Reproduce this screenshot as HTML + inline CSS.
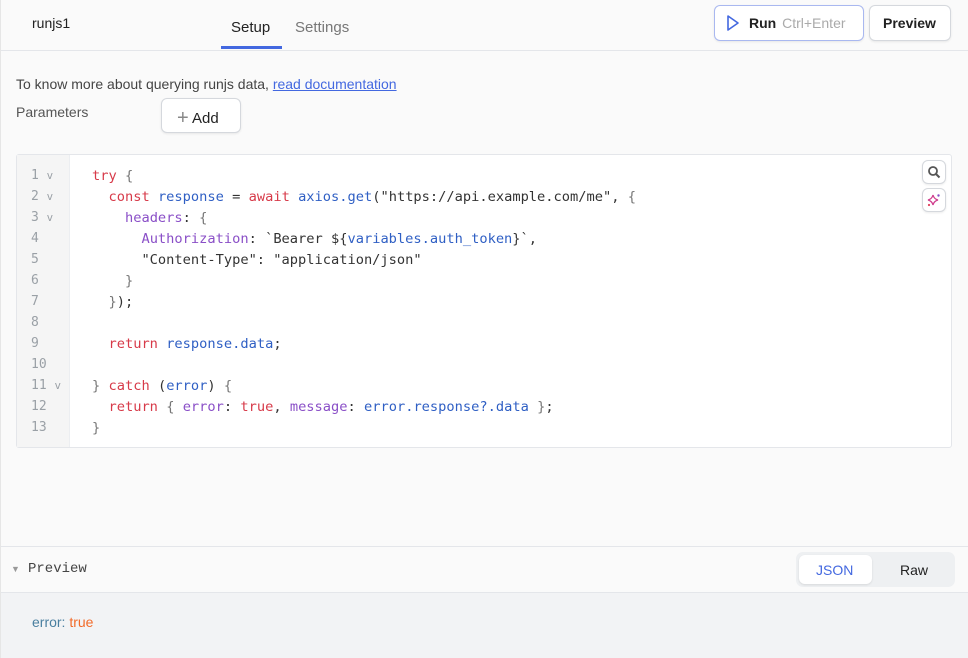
<!DOCTYPE html>
<html><head><meta charset="utf-8"><style>
*{box-sizing:border-box;margin:0;padding:0}
body{width:968px;height:658px;background:#fafafa;font-family:"Liberation Sans",sans-serif;position:relative;overflow:hidden;border-left:1px solid #e6e6e6}
.abs{position:absolute}
.hdr{left:0;top:0;width:968px;height:51px;border-bottom:1px solid #e4e6ea}
.btn{background:#fff;border:1px solid #d5d8dd;border-radius:6px;box-shadow:0 1px 2px rgba(0,0,0,.08)}
.code{left:15px;top:154px;width:936px;height:294px;background:#fff;border:1px solid #e4e6ea;border-radius:3px}
.gut{left:0;top:0;width:53px;height:292px;background:#f5f5f5;border-right:1px solid #eceef1}
.ln{font-family:"DejaVu Sans Mono",monospace;font-size:13px;color:#9aa0a6;position:absolute;left:14px;line-height:21px}
.src{position:absolute;left:75px;top:11px;font-family:"DejaVu Sans Mono",monospace;font-size:13.7px;line-height:21px;color:#333;white-space:pre}
.k{color:#d73a49}.v{color:#2f5fc4}.p{color:#8a4fc7}.b{color:#777}
</style></head><body>
<div class="abs hdr"></div>
<div class="abs" style="left:31px;top:15px;font-size:14px;color:#222">runjs1</div>
<div class="abs" style="left:230px;top:19px;font-size:15px;color:#222">Setup</div>
<div class="abs" style="left:220px;top:46px;width:61px;height:3px;background:#4368e0"></div>
<div class="abs" style="left:294px;top:19px;font-size:15px;color:#777">Settings</div>
<div class="abs btn" style="left:713px;top:5px;width:150px;height:36px;border-color:#a9b8f0"></div>
<svg class="abs" style="left:725px;top:14px" width="14" height="18"><path d="M2 2 L12 9 L2 16 Z" fill="none" stroke="#4368e0" stroke-width="1.6" stroke-linejoin="round"/></svg>
<div class="abs" style="left:748px;top:15px;font-size:14px;font-weight:bold;color:#222">Run <span style="font-weight:normal;color:#aaa;margin-left:2px">Ctrl+Enter</span></div>
<div class="abs btn" style="left:868px;top:5px;width:82px;height:36px"></div>
<div class="abs" style="left:882px;top:15px;font-size:14px;font-weight:bold;color:#222">Preview</div>
<div class="abs" style="left:15px;top:76px;font-size:14px;color:#444">To know more about querying runjs data, <span style="color:#4368e0;text-decoration:underline">read documentation</span></div>
<div class="abs" style="left:15px;top:104px;font-size:14px;color:#555">Parameters</div>
<div class="abs btn" style="left:160px;top:98px;width:80px;height:35px"></div>
<div class="abs" style="left:176px;top:106px;font-size:15px;color:#222"><span style="color:#888;font-size:20px;position:relative;top:1px">+</span> Add</div>
<div class="abs code">
<div class="abs gut"></div>
<div class="ln" style="top:10px">1 <small>v</small><br>2 <small>v</small><br>3 <small>v</small><br>4<br>5<br>6<br>7<br>8<br>9<br>10<br>11 <small>v</small><br>12<br>13</div>
<div class="src"><span class="k">try</span> <span class="b">{</span>
  <span class="k">const</span> <span class="v">response</span> = <span class="k">await</span> <span class="v">axios.get</span>("https://api.example.com/me", <span class="b">{</span>
    <span class="p">headers</span>: <span class="b">{</span>
      <span class="p">Authorization</span>: `Bearer ${<span class="v">variables.auth_token</span>}`,
      "Content-Type": "application/json"
    <span class="b">}</span>
  <span class="b">}</span>);

  <span class="k">return</span> <span class="v">response.data</span>;

<span class="b">}</span> <span class="k">catch</span> (<span class="v">error</span>) <span class="b">{</span>
  <span class="k">return</span> <span class="b">{</span> <span class="p">error</span>: <span class="k">true</span>, <span class="p">message</span>: <span class="v">error.response?.data</span> <span class="b">}</span>;
<span class="b">}</span></div>
<div class="abs btn" style="left:905px;top:5px;width:24px;height:24px"></div>
<svg class="abs" style="left:910px;top:10px" width="14" height="14"><circle cx="6" cy="6" r="4" fill="none" stroke="#555" stroke-width="1.8"/><path d="M9 9 L12.5 12.5" stroke="#555" stroke-width="2"/></svg>
<div class="abs btn" style="left:905px;top:33px;width:24px;height:24px"></div>
<svg class="abs" style="left:910px;top:38px" width="14" height="14"><path d="M6 2 Q7 6 11 7 Q7 8 6 12 Q5 8 1 7 Q5 6 6 2Z" fill="none" stroke="#d0408f" stroke-width="1.3"/><circle cx="11.5" cy="2.5" r="1.2" fill="#8a4fc7"/><circle cx="2" cy="12" r="1.1" fill="#e0405a"/></svg>
</div>
<div class="abs" style="left:0;top:546px;width:968px;height:1px;background:#e4e6ea"></div>
<div class="abs" style="left:10px;top:564px;font-size:9px;color:#999">▼</div>
<div class="abs" style="left:27px;top:561px;font-family:'Liberation Mono',monospace;font-size:14px;color:#444">Preview</div>
<div class="abs" style="left:795px;top:552px;width:159px;height:35px;background:#eef0f2;border-radius:7px"></div>
<div class="abs" style="left:798px;top:555px;width:73px;height:29px;background:#fff;border-radius:6px;box-shadow:0 1px 2px rgba(0,0,0,.1)"></div>
<div class="abs" style="left:815px;top:562px;font-size:14px;color:#4368e0">JSON</div>
<div class="abs" style="left:899px;top:562px;font-size:14px;color:#222">Raw</div>
<div class="abs" style="left:0;top:592px;width:968px;height:66px;background:#f2f3f5;border-top:1px solid #e4e6ea"></div>
<div class="abs" style="left:31px;top:614px;font-size:14px;color:#4a7fa0">error: <span style="color:#f26b2a">true</span></div>
</body></html>
